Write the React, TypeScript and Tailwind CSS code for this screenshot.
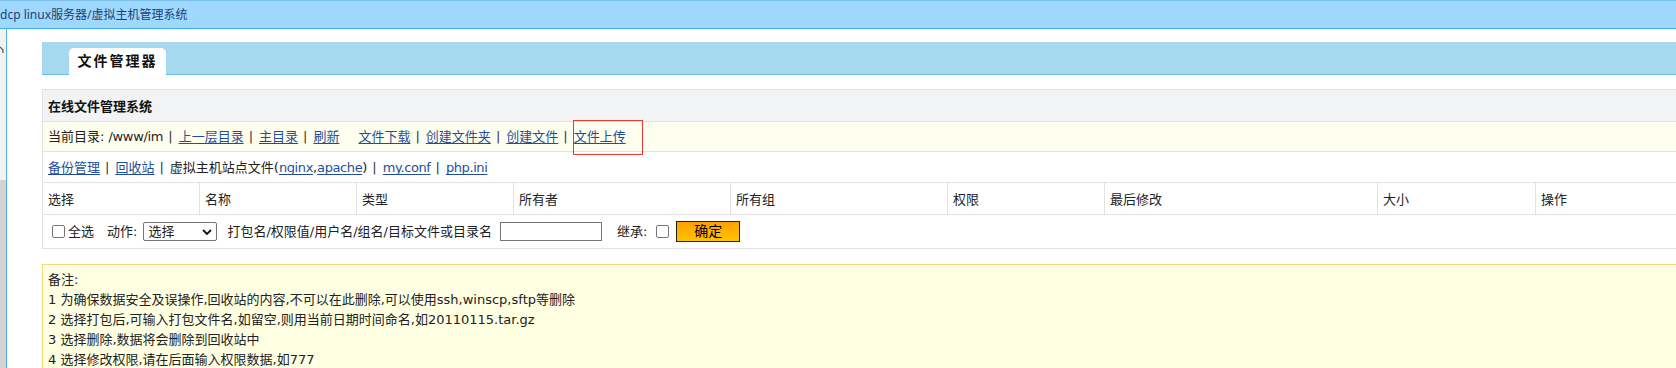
import type { ReactNode } from 'react'

function Sep() {
  return <span className="ml-[5px] mr-[6px] text-[#333]">|</span>
}

function L({ children, tight }: { children: ReactNode; tight?: boolean }) {
  return (
    <a href="#" className={tight ? 'text-[#1f4f9c] underline underline-offset-2 tracking-[-0.4px]' : 'text-[#1f4f9c] underline underline-offset-2'}>
      {children}
    </a>
  )
}

const cols = [
  { label: '选择', w: 'w-[157px]' },
  { label: '名称', w: 'w-[157px]' },
  { label: '类型', w: 'w-[157px]' },
  { label: '所有者', w: 'w-[217px]' },
  { label: '所有组', w: 'w-[217px]' },
  { label: '权限', w: 'w-[157px]' },
  { label: '最后修改', w: 'w-[273px]' },
  { label: '大小', w: 'w-[158px]' },
  { label: '操作', w: 'flex-1' },
]

const notes = [
  '备注:',
  '1 为确保数据安全及误操作,回收站的内容,不可以在此删除,可以使用ssh,winscp,sftp等删除',
  '2 选择打包后,可输入打包文件名,如留空,则用当前日期时间命名,如20110115.tar.gz',
  '3 选择删除,数据将会删除到回收站中',
  '4 选择修改权限,请在后面输入权限数据,如777',
]

export default function App() {
  return (
    <div className="relative w-[1676px] h-[368px] overflow-hidden bg-white text-[13px] text-[#222] [font-family:'DejaVu_Sans','Noto_Sans_CJK_SC',sans-serif]">
      {/* title bar */}
      <div className="h-[29px] bg-[#9fd8ff] border-t border-t-[#78bfee] border-b border-b-[#3fb0e8] flex items-center text-[12px] text-[#1d3f72] [font-family:'Noto_Sans','Noto_Sans_CJK_SC',sans-serif]">
        dcp linux服务器/虚拟主机管理系统
      </div>

      <div className="flex h-[339px]">
        {/* left frame edge */}
        <div className="w-[6px] flex flex-col">
          <div className="h-[151px] bg-[#f2f2f2] pt-[17px]">
            <svg width="5" height="8" viewBox="0 0 5 8">
              <polyline points="0,1 3,4 3,7" fill="none" stroke="#555" strokeWidth="1.2" />
            </svg>
          </div>
          <div className="flex-1 bg-[#d3d3d3]" />
        </div>
        <div className="w-px bg-[#4fb3ea]" />

        <div className="flex-1 min-w-0 pl-[35px] pt-[13px]">
          {/* tab band */}
          <div className="h-[33px] bg-[#a6d9ef] border-b border-[#6bbde6] flex items-end pl-[27px]">
            <div className="w-[97px] h-[27px] -mb-px bg-white rounded-t-[5px] flex items-center justify-center font-bold text-[14px] tracking-[2px] text-[#111]">
              文件管理器
            </div>
          </div>

          <div className="mt-[14px] h-[32px] border-t border-l border-[#e2e2e2] bg-[#f2f3f5] flex items-center pt-[2px] pl-[5px] font-bold text-[#111]">
            在线文件管理系统
          </div>

          <div className="h-[30px] border-t border-l border-[#e2e2e2] bg-[#fffff0] flex items-center pl-[5px] whitespace-nowrap">
            <span>当前目录:</span>
            <span className="ml-[4px] tracking-[-0.3px]">/www/im</span>
            <Sep />
            <L>上一层目录</L>
            <Sep />
            <L>主目录</L>
            <Sep />
            <L>刷新</L>
            <span className="ml-[19px]" />
            <L>文件下载</L>
            <Sep />
            <L>创建文件夹</L>
            <Sep />
            <L>创建文件</L>
            <Sep />
            <L>文件上传</L>
          </div>

          <div className="h-[31px] border-t border-l border-[#e2e2e2] flex items-center pt-[2px] pl-[5px] whitespace-nowrap">
            <L>备份管理</L>
            <Sep />
            <L>回收站</L>
            <Sep />
            <span>虚拟主机站点文件(</span>
            <L tight>nginx</L>
            <span>,</span>
            <L tight>apache</L>
            <span>)</span>
            <Sep />
            <L tight>my.conf</L>
            <Sep />
            <L tight>php.ini</L>
          </div>

          {/* file table */}
          <div className="border-t border-[#e2e2e2]">
            <div className="h-[31px] flex">
              {cols.map((c) => (
                <div key={c.label} className={`${c.w} h-full border-l border-[#e2e2e2] pl-[5px] pt-[2px] flex items-center`}>
                  {c.label}
                </div>
              ))}
            </div>
            <div className="h-[35px] border-t border-b border-l border-[#e2e2e2] flex items-center pl-[9px] whitespace-nowrap">
              <input type="checkbox" className="appearance-none w-[13px] h-[13px] border border-[#777] rounded-[2px] bg-white" />
              <span className="ml-[3px]">全选</span>
              <span className="ml-[13px]">动作:</span>
              <div className="relative ml-[6px] w-[74px] h-[19px] border border-[#767676] rounded-[2px] bg-white flex items-center pl-[4px]">
                选择
                <svg className="absolute right-[4px] top-[6px]" width="10" height="6" viewBox="0 0 10 6">
                  <polyline points="1,1 5,5 9,1" fill="none" stroke="#111" strokeWidth="1.8" />
                </svg>
              </div>
              <span className="ml-[10px]">打包名/权限值/用户名/组名/目标文件或目录名</span>
              <input type="text" className="ml-[8px] w-[102px] h-[19px] border border-[#767676] bg-white outline-none" />
              <span className="ml-[15px]">继承:</span>
              <input type="checkbox" className="ml-[9px] appearance-none w-[13px] h-[13px] border border-[#777] rounded-[2px] bg-white" />
              <button className="ml-[7px] w-[64px] h-[21px] border border-[#222] bg-gradient-to-b from-[#ffa000] to-[#ffc400] text-[14px] text-black flex items-center justify-center">
                确定
              </button>
            </div>
          </div>

          {/* notes */}
          <div className="mt-[15px] border border-r-0 border-[#f3d97a] bg-[#ffffe1] pt-[5px] pl-[5px] pb-[10px] leading-[20px] whitespace-nowrap">
            {notes.map((n) => (
              <div key={n}>{n}</div>
            ))}
          </div>
        </div>
      </div>

      {/* red annotation box */}
      <div className="absolute left-[573px] top-[120px] w-[70px] h-[35px] border border-[#e53935]" />
    </div>
  )
}
